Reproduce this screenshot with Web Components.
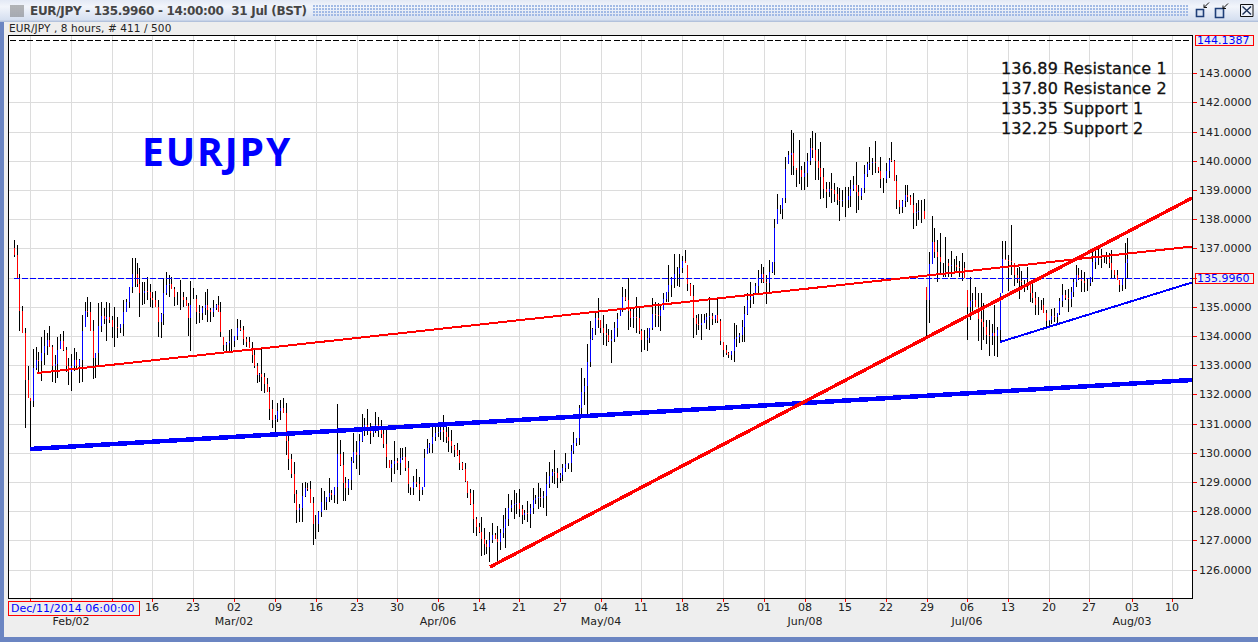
<!DOCTYPE html>
<html>
<head>
<meta charset="utf-8">
<title>EUR/JPY</title>
<style>
  html, body { margin: 0; padding: 0; background: #eeeeee; overflow: hidden; }
  chart-note.label { --note-left: 133px; --note-top: 91px; }
  chart-note.levels { --note-left: 992px; --note-top: 23px; }
</style>
</head>
<body>
<chart-window>
  <span slot="title">EUR/JPY - 135.9960 - 14:00:00&nbsp; 31 Jul (BST)</span>
  <span slot="info">EUR/JPY , 8 hours, # 411 / 500</span>
  <bar-chart>
    <chart-note class="label" kind="big">EURJPY</chart-note>
    <chart-note class="levels" kind="list">136.89 Resistance 1<br>137.80 Resistance 2<br>135.35 Support 1<br>132.25 Support 2</chart-note>
  </bar-chart>
  <price-axis slot="prices"></price-axis>
  <time-axis slot="times"></time-axis>
</chart-window>

<script>
const GRID_X = [30,71,112,152,193,234,275,316,357,397,438,479,519,560,601,641,682,723,764,805,845,886,927,967,1008,1049,1089,1132,1172];
const TICK_NAMES = ["16","23","02","09","16","23","30","06","14","21","27","04","11","18","25","01","08","15","22","29","06","13","20","27","03","10"];
const MONTHS = [["Feb/02",71],["Mar/02",234],["Apr/06",438],["May/04",601],["Jun/08",805],["Jul/06",967],["Aug/03",1132]];
const priceY = p => Math.floor(73.6 + (143 - p) * 29.2);

// bars read off the reference: x0, y0, then "x,top,bottom" at 3x scale
const BAR_SEGMENTS = [
  [0, 230, 0, 260, "43,30,80 52,45,145 58,132,303 67,228,308 76,295,593 85,408,505 91,505,660 100,357,530 108,350,420 115,365,430 124,320,452 133,300,405 142,308,375 148,288,350 157,345,455 166,375,460 172,322,445 181,312,358 190,303,362 199,352,425 205,385,465 214,372,482 223,353,422 229,365,420 238,388,460 247,255,455 256,215,290 262,200,262 271,217,302 280,270,448 286,370,445 295,220,408 304,217,305 313,233,282 319,215,332 328,220,280 337,257,325 343,232,350 352,262,325 361,282,310 370,210,317 379,207,245 388,172,235 397,85,190 406,85,172 412,98,170 418,115,260 427,155,225 433,155,222 442,140,210 451,162,232 457,185,235 466,182,232 475,210,320 484,250,325 490,145,285 499,125,195 508,135,200 514,140,178 523,170,228 532,185,225 541,150,240 550,185,230 559,200,228 565,218,318 571,152,362 580,175,208 589,195,282 598,225,278 607,228,270 616,187,255 622,178,275 631,235,275 640,210,262 649,222,240 655,198,245 661,215,322 670,320,362 679,337,362 688,300,362 694,298,370 703,318,350 712,268,330 721,270,302 730,288,345 739,322,352 748,320,355 757,335,400 763,355,415 772,398,460 778,428,455"],
  [260, 280, 260, 500, "4,208,332 13,280,338 22,295,335 28,320,420 37,360,445 46,405,465 52,368,425 61,360,420 70,355,400 79,370,525 85,465,570 94,522,593 103,545,668 109,630,728 118,672,725 127,610,725 136,607,650 142,608,632 151,603,668 160,650,795 166,705,778 175,692,757 184,625,712 193,632,690 199,650,690 208,595,665 214,630,660 223,620,668 232,372,672 241,480,558 250,516,662 256,590,662 265,597,645 274,530,630 280,460,550 289,484,567 298,462,585 307,402,485 313,415,468 322,388,465 331,430,492 340,440,470 346,396,460 355,410,472 364,420,475 370,450,505 379,448,565 388,540,565 394,540,605 403,482,582 412,535,570 421,505,585 427,505,540 436,502,572 445,543,640 451,620,645 460,588,645 469,568,622 478,590,662 487,620,645 493,508,622 502,478,522 508,490,520 517,440,518 526,438,482 535,442,472 541,425,480 550,405,485 559,440,490 565,442,515 574,450,520 583,495,530 592,490,527 598,510,570 607,545,570 616,550,605 622,603,655 631,628,675 640,630,760 649,712,768 658,728,758 664,712,828 673,745,825 679,780,822 688,755,845 697,728,790 706,760,778 712,738,845"],
  [500, 370, 500, 581, "0,478,540 10,435,505 16,415,535 25,372,468 34,390,425 43,360,447 49,370,432 58,357,442 67,405,462 73,420,450 82,392,455 91,402,473 100,355,432 106,375,402 115,338,418 121,355,410 130,362,413 139,305,437 148,277,353 157,298,340 163,240,342 172,295,353 181,310,340 187,282,333 196,250,305 205,280,297 214,225,306 220,185,252 229,205,228 238,105,225"],
  [510, 230, 581, 759, "215,415,555 223,445,525 232,342,555 241,273,412 247,295,330 256,245,315 265,205,295 271,270,310 280,255,345 289,283,348 295,298,335 304,300,398 313,275,335 322,250,320 331,240,258 337,170,245 346,178,213 355,145,300 361,235,290 370,235,295 379,200,310 388,235,312 394,298,365 403,300,360 412,295,362 418,295,340 427,205,300 436,215,292 445,220,290 451,225,302 460,188,240 469,185,215 475,105,215 484,140,200 493,72,175 502,112,168 508,72,170 517,78,130 526,60,100 532,105,182 541,160,198 550,165,325 559,255,315 565,252,300 574,252,330 583,252,280 589,250,298 598,200,300 607,250,285 616,255,280 622,200,280 631,268,345 640,335,382 649,345,375 655,365,385 664,362,390 673,280,395 679,285,350 688,310,340 697,270,335 703,228,335 712,190,255 721,155,235 730,190,222 736,160,195 745,120,195"],
  [760, 120, 759, 1020, "4,432,490 10,440,490 19,465,552 28,420,518 37,425,460 43,297,465 52,222,312 61,255,282 67,235,298 76,110,250 85,92,132 94,30,165 100,40,165 109,145,200 118,60,192 124,138,210 133,125,210 142,98,200 151,55,135 157,32,115 166,38,180 175,88,180 181,65,237 190,145,235 199,185,265 208,185,232 214,158,250 223,190,245 232,200,255 238,205,302 247,210,260 256,200,292 265,200,265 271,180,262 280,168,212 289,125,278 295,195,270 304,205,240 313,135,220 322,125,170 328,80,150 337,115,165 346,62,158 355,140,158 361,110,205 370,175,218 379,130,188 388,115,175 394,65,125 403,120,182 409,165,268 418,240,282 427,240,278 436,195,262 442,195,245 451,225,255 460,218,328 469,250,318 475,240,300 484,240,310 493,238,298 499,500,655 508,397,610 517,288,432 523,325,415 532,360,485 541,340,460 550,430,470 556,350,470 565,418,472 574,392,470 583,418,455 589,408,460 598,422,470 607,398,482 613,425,475 622,510,660 631,470,600 637,520,580 646,502,560 655,518,662 664,520,690 670,550,660 679,600,672 688,600,708 697,612,675 703,555,708 712,620,710 721,520,665 727,362,520 736,362,420 745,405,512 754,315,465 763,430,498 772,445,490"],
  [1000, 200, 1017, 1130, "58,200,298 64,212,260 73,240,275 82,200,270 91,250,305 97,250,308 106,275,345 115,290,345 124,300,330 130,295,340 139,330,385 148,360,380 154,328,372 163,325,365 172,340,368 178,295,345 187,252,320 196,270,300 205,268,335 214,262,320 220,235,290 229,195,260 235,205,240 244,210,275 253,215,275 262,235,272 271,230,258 277,150,245 286,140,208 295,148,195 304,148,205 313,165,190 319,155,192 328,160,205 334,150,238 343,210,238 352,210,240 358,240,275 367,235,272 376,130,268 382,115,238"]
];

function readBars() {
  const bars = [];
  for (const [x0, y0, from, to, text] of BAR_SEGMENTS) {
    for (const item of text.split(" ")) {
      const [x, top, bottom] = item.split(",").map(Number);
      const realX = x0 + x / 3;
      if (realX < from || realX >= to) continue;
      bars.push({ x: Math.floor(realX) + 0.5, top: y0 + top / 3, bottom: y0 + bottom / 3 });
    }
  }
  return bars;
}

function barMarkup() {
  const bars = readBars();
  const mid = b => (b.top + b.bottom) / 2;
  const clamp = (v, b) => Math.min(b.bottom, Math.max(b.top, v));
  let wicks = "", ups = "", downs = "";
  let prevClose = mid(bars[0]);
  bars.forEach((bar, i) => {
    const next = bars[i + 1] || bar;
    const close = clamp((mid(bar) + mid(next)) / 2, bar);
    const open = clamp(prevClose, bar);
    wicks += `M${bar.x} ${bar.top.toFixed(0)}V${bar.bottom.toFixed(0)}`;
    const piece = `M${bar.x} ${Math.min(open, close).toFixed(0)}V${Math.max(open, close).toFixed(0)}`;
    if (close < open) ups += piece; else downs += piece;
    prevClose = close;
  });
  return `<path d="${wicks}" stroke="#000"/><path d="${ups}" stroke="#00f"/><path d="${downs}" stroke="#f00"/>`;
}

class ChartWindow extends HTMLElement {
  constructor() {
    super();
    this.shadow = this.attachShadow({ mode: "open" });
    this.shadow.innerHTML = `
      <style>
        :host { display: flex; flex-direction: column; width: 1258px; height: 642px; background: #eee; color: #222; font-family: "DejaVu Sans", sans-serif; }
        .bar { display: flex; align-items: center; height: 22px; box-sizing: border-box; flex: none; background: linear-gradient(#e3e9f5, #f2f5fb 30%, #d5dff0 90%, #a9b9d6); }
        .grip { width: 14px; height: 12px; margin: 0 6px 0 10px; background: radial-gradient(circle at 1px 1px, #666 0.6px, transparent 0.8px) 0 0 / 2px 2px; }
        .title { font-size: 12px; font-weight: bold; color: #454545; white-space: nowrap; letter-spacing: -0.32px; }
        .dots { flex: 1; height: 12px; margin: 0 6px; background: radial-gradient(circle at 1px 1px, #9fb8e4 0.7px, transparent 0.9px) 0 0 / 3px 3px; }
        .buttons { display: flex; flex: none; gap: 0; height: 22px; }
        .buttons svg { display: block; }
        .body { flex: 1; display: flex; flex-direction: column; border-left: 4px solid #6b85c2; border-bottom: 5px solid #6b85c2; min-height: 0; padding-left: 4px; }
        .info { height: 13px; font-size: 10.5px; line-height: 13px; padding-left: 1px; color: #222; white-space: nowrap; flex: none; letter-spacing: 0.1px; }
        .row { display: flex; flex: none; height: 564px; }
      </style>
      <div class="bar">
        <span class="grip"></span>
        <span class="title"><slot name="title"></slot></span>
        <span class="dots"></span>
        <span class="buttons">
          <svg width="64" height="22" viewBox="0 0 64 22" fill="none">
            <path d="M2.5 9.5h7v7h-7z" stroke="#1f3f78" stroke-width="1.6" fill="#dbe5f5"/>
            <path d="M15 2.5 10 7.5M10 4.5v3h3" stroke="#111"/>
            <path d="M21.5 8.5h8v9h-8z" stroke="#1f3f78" stroke-width="1.6" fill="#dbe5f5"/>
            <path d="M34 3.5 29 8.5M29 5.5v3h3" stroke="#111"/>
            <path d="M46.5 4.5h12.5v12h-12.5z" stroke="#111" fill="#eef2fa"/>
            <path d="M48.5 6.5 57 14.5M57 6.5 48.5 14.5" stroke="#1b2f55" stroke-width="1.4"/>
          </svg>
        </span>
      </div>
      <div class="body">
        <div class="info"><slot name="info"></slot></div>
        <div class="row"><slot></slot><slot name="prices"></slot></div>
        <slot name="times"></slot>
      </div>
    `;
  }
}

class BarChart extends HTMLElement {
  constructor() {
    super();
    this.shadow = this.attachShadow({ mode: "open" });
    let grid = "";
    for (const x of GRID_X) grid += `M${x + 0.5} 36V598`;
    for (let p = 126; p <= 143; p++) grid += `M9 ${priceY(p) + 0.5}H1192`;
    this.shadow.innerHTML = `
      <style>
        :host { display: block; position: relative; box-sizing: border-box; flex: none; width: 1185px; height: 564px; background: #fff; border: 1px solid #000; }
        svg { display: block; }
      </style>
      <svg width="1183" height="562" viewBox="9 36 1183 562" fill="none" shape-rendering="crispEdges">
        <path d="${grid}" stroke="#dcdcdc"/>
        <path d="M10 40.5H1192" stroke="#000" stroke-dasharray="6 2.5"/>
        <g stroke-width="1">${barMarkup()}</g>
        <path d="M14 278.5H1192" stroke="#00f" stroke-dasharray="5.5 2.5"/>
        <path d="M37 373L1192 246.5" stroke="#f00" stroke-width="2"/>
        <path d="M30 449L1192 380" stroke="#00f" stroke-width="4.5"/>
        <path d="M490 567L1192 198" stroke="#f00" stroke-width="3.4"/>
        <path d="M1000 342L1192 282.5" stroke="#00f" stroke-width="2"/>
      </svg>
      <slot></slot>
    `;
  }
}

class ChartNote extends HTMLElement {
  constructor() {
    super();
    this.shadow = this.attachShadow({ mode: "open" });
    this.shadow.innerHTML = `
      <style>
        :host { position: absolute; left: var(--note-left); top: var(--note-top); white-space: nowrap; }
        :host([kind="big"]) { font: 700 39px/48px "Open Sans", sans-serif; color: #00f; letter-spacing: 1.9px; }
        :host([kind="list"]) { font: 400 16px/20px "DejaVu Sans", sans-serif; color: #111; letter-spacing: 0.18px; -webkit-text-stroke: 0.3px #111; }
      </style>
      <slot></slot>
    `;
  }
}

class PriceAxis extends HTMLElement {
  constructor() {
    super();
    this.shadow = this.attachShadow({ mode: "open" });
    let rows = "";
    for (let p = 126; p <= 143; p++) {
      const y = priceY(p);
      rows += `<i class="tick" style="top:${y - 35}px"></i>`;
      // the current price flag sits where 136 would be
      if (p !== 136) rows += `<span class="price" style="top:${y - 41}px">${p}.0000</span>`;
    }
    rows += `<span class="price flag" style="top:0">144.1387</span>`;
    rows += `<span class="price flag" style="top:238px">135.9960</span>`;
    this.shadow.innerHTML = `
      <style>
        :host { display: block; position: relative; flex: 1; font-size: 11px; }
        .tick { position: absolute; left: 0; width: 4px; height: 1px; background: #f00; }
        .price { position: absolute; left: 6px; line-height: 14px; color: #222; }
        .flag { left: 2px; width: 56px; height: 9px; padding-left: 1px; box-sizing: content-box; line-height: 9px; color: #00f; border: 1px solid #f00; white-space: nowrap; }
      </style>
      ${rows}
    `;
  }
}

class TimeAxis extends HTMLElement {
  constructor() {
    super();
    this.shadow = this.attachShadow({ mode: "open" });
    let marks = "";
    for (const x of GRID_X) marks += `<i class="tick" style="left:${x - 8}px"></i>`;
    TICK_NAMES.forEach((name, i) => {
      marks += `<span class="mark" style="left:${GRID_X[i + 3] - 8}px;top:2px">${name}</span>`;
    });
    for (const [name, x] of MONTHS) marks += `<span class="mark" style="left:${x - 8}px;top:16px">${name}</span>`;
    this.shadow.innerHTML = `
      <style>
        :host { display: block; position: relative; flex: 1; font-size: 11px; color: #222; }
        .tick { position: absolute; top: 0; width: 1px; height: 3px; background: #f00; }
        .mark { position: absolute; transform: translateX(-50%); line-height: 14px; white-space: nowrap; }
        .date { position: absolute; left: 0; top: 2px; box-sizing: border-box; width: 132px; height: 15px; line-height: 13px; padding-left: 2px; color: #00f; background: #eee; border: 1px solid #f00; white-space: nowrap; }
      </style>
      ${marks}
      <span class="date">Dec/11/2014 06:00:00</span>
    `;
  }
}

customElements.define("chart-window", ChartWindow);
customElements.define("bar-chart", BarChart);
customElements.define("chart-note", ChartNote);
customElements.define("price-axis", PriceAxis);
customElements.define("time-axis", TimeAxis);
</script>
</body>
</html>
